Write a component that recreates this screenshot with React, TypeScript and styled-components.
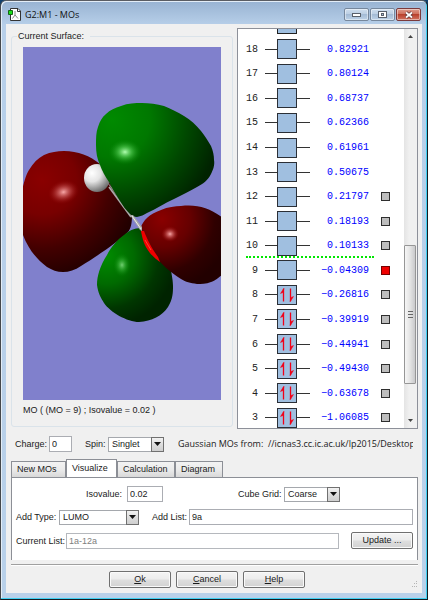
import React, { useState } from "react";
import styled, { createGlobalStyle, css } from "styled-components";

const uiFont = `"Liberation Sans", Arial, sans-serif`;
const titleFont = `"Open Sans", "Noto Sans", sans-serif`;

const GlobalStyle = createGlobalStyle`
  *, *::before, *::after { box-sizing: border-box; }
  body { margin: 0; background: #10406e; }
  body, button, input, select { font-family: ${uiFont}; font-size: 9px; line-height: 12px; color: #1a1a1a; }
`;

const Window = styled.main`
  display: flex;
  flex-direction: column;
  min-height: 100vh;
  padding: 0 5px 6px;
  border: 1px solid #161c22;
  border-left-color: #45484c;
  border-top-color: #5a5d63;
  border-radius: 6px 6px 0 0;
  background: linear-gradient(#98b3d2 0, #b7cfe9 24px, #b9d1ea);
  box-shadow: inset -1px -1px 0 #3fd0f2, inset 1px 1px 0 #e3edf7;
`;

const TitleBar = styled.header`
  display: flex;
  align-items: center;
  gap: 4px;
  height: 23px;
  padding: 4px 1px 0 2px;
`;

const Title = styled.h1`
  flex: 1;
  margin: 0;
  font: 400 9px/14px ${titleFont};
  color: #111;
`;

const WindowButtons = styled.div`
  display: flex;
  gap: 1px;
`;

const WindowButton = styled.button<{ $danger?: boolean }>`
  display: flex;
  align-items: center;
  justify-content: center;
  width: 25px;
  height: 13px;
  padding: 0;
  border: 1px solid ${(p) => (p.$danger ? "#7b3a3c" : "#76879c")};
  border-radius: 2px;
  background: ${(p) =>
    p.$danger
      ? "linear-gradient(#dd9a8c 0, #d0705d 45%, #b9412d 50%, #d27360)"
      : "linear-gradient(#cfdeee 0, #bccfe4 45%, #a4bbd5 50%, #bdd2e8)"};
  box-shadow: inset 0 0 0 1px rgba(255, 255, 255, 0.45);
`;

const Client = styled.div`
  display: flex;
  flex: 1;
  flex-direction: column;
  padding: 4px 4px 5px 5px;
  background: #f0f0f0;
`;

const Workspace = styled.section`
  display: grid;
  flex: 1;
  grid-template-columns: minmax(0, 1fr) 181px;
  gap: 4px;
`;

const Surface = styled.fieldset`
  display: flex;
  flex-direction: column;
  min-width: 0;
  margin: 2px 0 2px;
  padding: 5px 11px 10px 11px;
  border: 1px solid #dae3ea;
  border-radius: 3px;
`;

const Legend = styled.legend`
  margin-left: -6px;
  padding: 0 6px 0 1px;
`;

const Viewport = styled.div`
  display: flex;
  flex: 1;
  min-height: 120px;
  contain: size;
  background: #8080cc;
  svg { flex: 1; min-width: 0; }
`;

const Caption = styled.p`
  margin: 4px 0 0;
`;

const OrbitalPane = styled.div`
  display: flex;
  min-width: 0;
  overflow: hidden;
  border: 1px solid #8d9099;
  background: #fff;
`;

const Orbitals = styled.ul`
  display: flex;
  flex: 1;
  flex-direction: column;
  margin: 0 0 -2px;
  padding: 0;
  list-style: none;
`;

const Orbital = styled.li<{ $divider?: boolean }>`
  display: grid;
  flex: 1;
  grid-template-columns: 20px 52px 59px 22px;
  align-items: center;
  position: relative;
  font: 10px/13px "Liberation Mono", monospace;
  color: #222;
  ${(p) =>
    p.$divider &&
    css`
      &::before {
        content: "";
        position: absolute;
        top: -2px;
        left: 8px;
        width: 128px;
        border-top: 2px dotted #00e600;
      }
    `}
`;

const PeekRow = styled.li`
  height: 8px;
  padding-left: 39px;
`;

const PeekBox = styled.div`
  width: 20px;
  height: 5px;
  border: 1px solid #222;
  border-top: 0;
  background: #9fbfe0;
`;

const Index = styled.span`
  text-align: right;
`;

const Level = styled.span`
  display: flex;
  align-items: center;
  margin-left: 7px;
  width: 45px;
  &::before { content: ""; width: 12px; height: 1px; background: #333; }
  &::after { content: ""; width: 13px; height: 1px; background: #333; }
`;

const Box = styled.span`
  width: 20px;
  height: 20px;
  border: 1px solid #2b2f36;
  background: #a0bfe0;
  svg { display: block; }
`;

const Energy = styled.span`
  text-align: right;
  color: #0000ff;
`;

const Pick = styled.input`
  appearance: none;
  width: 9px;
  height: 9px;
  margin: 0 0 0 12px;
  border: 1px solid #2e2e2e;
  background: #bdbdbd;
  &:checked { background: #f00000; border-color: #700; }
`;

const Scroll = styled.div`
  display: flex;
  flex-direction: column;
  width: 13px;
  background: linear-gradient(90deg, #e4e4e4, #f0f0f0 40%);
`;

const ScrollArrow = styled.button`
  display: flex;
  align-items: center;
  justify-content: center;
  height: 15px;
  padding: 0;
  border: 0;
  background: transparent;
`;

const ScrollGap = styled.div<{ $grow: number }>`
  flex: ${(p) => p.$grow};
`;

const Thumb = styled.div`
  display: flex;
  flex: 138;
  align-items: center;
  justify-content: center;
  margin-right: 1px;
  border: 1px solid #969696;
  border-radius: 1px;
  background: linear-gradient(90deg, #f6f6f6, #e4e4e4 50%, #c9c9cb);
`;

const Grip = styled.span`
  width: 5px;
  height: 7px;
  background: repeating-linear-gradient(#666 0 1px, transparent 1px 3px);
`;

const Settings = styled.div`
  display: flex;
  align-items: center;
  margin-top: 7px;
  padding: 0 5px 0 4px;
`;

const Label = styled.label<{ $width: number; $right?: boolean }>`
  flex: none;
  width: ${(p) => p.$width}px;
  padding-right: ${(p) => (p.$right ? 5 : 0)}px;
  text-align: ${(p) => (p.$right ? "right" : "left")};
  white-space: nowrap;
`;

const TextBox = styled.input<{ $width?: number }>`
  flex: ${(p) => (p.$width ? "none" : "1")};
  width: ${(p) => (p.$width ? `${p.$width}px` : "auto")};
  min-width: 0;
  height: 16px;
  padding: 0 2px;
  border: 1px solid #abadb3;
  border-radius: 0;
  background: #fff;
  &:disabled { color: #808080; border-color: #b5b8bd; }
`;

const SelectWrap = styled.span<{ $width: number }>`
  position: relative;
  flex: none;
  width: ${(p) => p.$width}px;
  height: 15px;
`;

const Select = styled.select`
  display: block;
  appearance: none;
  width: 100%;
  height: 100%;
  padding: 0 14px 1px 3px;
  border: 1px solid #a5a8ad;
  border-radius: 0;
  background: #fff;
`;

const DropMark = styled.span`
  position: absolute;
  top: 0;
  right: 0;
  bottom: 0;
  display: flex;
  align-items: center;
  justify-content: center;
  width: 13px;
  border: 1px solid #707070;
  background: linear-gradient(#f2f2f2, #dddddd 50%, #cfcfcf);
  pointer-events: none;
`;

const Source = styled.p`
  flex: 1;
  min-width: 0;
  margin: 0 0 0 14px;
  overflow: hidden;
  font: 9px/14px ${titleFont};
  white-space: pre;
`;

const Tabs = styled.div`
  display: flex;
  align-items: flex-end;
  margin: 7px 0 -1px;
  height: 19px;
`;

const Tab = styled.button<{ $active: boolean; $width: number }>`
  flex: none;
  width: ${(p) => p.$width}px;
  height: ${(p) => (p.$active ? 19 : 17)}px;
  padding: 0 0 1px 5px;
  border: 1px solid #8c8f96;
  border-bottom-color: ${(p) => (p.$active ? "#fff" : "#8c8f96")};
  background: ${(p) => (p.$active ? "#fff" : "linear-gradient(#f3f3f3, #ebebeb 50%, #d8d8d8)")};
  text-align: left;
  white-space: nowrap;
`;

const Panel = styled.section`
  display: flex;
  flex-direction: column;
  gap: 7px;
  padding: 8px 4px 11px;
  border: 1px solid #8c8f96;
  border-bottom: 0;
  background: #fff;
`;

const FormRow = styled.div`
  display: flex;
  align-items: center;
`;

const Spacer = styled.span<{ $width?: number }>`
  flex: ${(p) => (p.$width ? "none" : "1")};
  width: ${(p) => p.$width ?? 0}px;
`;

const PushButton = styled.button`
  flex: none;
  width: 62px;
  height: 17px;
  padding: 0 0 1px;
  border: 1px solid #707070;
  border-radius: 2px;
  background: linear-gradient(#f4f4f4, #ececec 48%, #dedede 52%, #d2d2d2);
  box-shadow: inset 0 0 0 1px #fafafa;
`;

const Footer = styled.footer`
  display: flex;
  align-items: center;
  margin-top: 4px;
  padding-top: 6px;
  border-top: 1px solid #a0a0a0;
  box-shadow: inset 0 1px 0 #fff;
`;

const FooterButtons = styled.div`
  display: flex;
  flex: 1;
  justify-content: center;
  gap: 5px;
  padding-right: 8px;
`;

const GripMark = styled.svg`
  align-self: flex-end;
`;

type Row = { n: number; e: string; pick?: boolean };

const rows: Row[] = [
  { n: 18, e: "0.82921" },
  { n: 17, e: "0.80124" },
  { n: 16, e: "0.68737" },
  { n: 15, e: "0.62366" },
  { n: 14, e: "0.61961" },
  { n: 13, e: "0.50675" },
  { n: 12, e: "0.21797", pick: true },
  { n: 11, e: "0.18193", pick: true },
  { n: 10, e: "0.10133", pick: true },
  { n: 9, e: "−0.04309", pick: true },
  { n: 8, e: "−0.26816", pick: true },
  { n: 7, e: "−0.39919", pick: true },
  { n: 6, e: "−0.44941", pick: true },
  { n: 5, e: "−0.49430", pick: true },
  { n: 4, e: "−0.63678", pick: true },
  { n: 3, e: "−1.06085", pick: true },
];

const tabs = [
  { name: "New MOs", width: 55 },
  { name: "Visualize", width: 51 },
  { name: "Calculation", width: 58 },
  { name: "Diagram", width: 48 },
];

function Electrons() {
  return (
    <svg width="18" height="18" viewBox="0 0 18 18" aria-hidden="true">
      <path d="M5.500 3V15.500" stroke="#f00018" strokeWidth="1.300" />
      <path d="M6 2L2.500 7.500L5 6.500Z" fill="#f00018" stroke="#f00018" strokeWidth=".5" />
      <path d="M12.500 2.500V15" stroke="#f00018" strokeWidth="1.300" />
      <path d="M12 16L15.500 10.500L13 11.500Z" fill="#f00018" stroke="#f00018" strokeWidth=".5" />
    </svg>
  );
}

function Molecule() {
  return (
    <svg viewBox="23 47 198 353" preserveAspectRatio="xMidYMid slice" role="img" aria-label="Molecular orbital surface">
      <defs>
        <radialGradient id="redLeft" gradientUnits="userSpaceOnUse" cx="42" cy="180" r="98">
          <stop offset="0" stopColor="#8a0000" />
          <stop offset=".35" stopColor="#780000" />
          <stop offset=".7" stopColor="#430000" />
          <stop offset="1" stopColor="#220000" />
        </radialGradient>
        <radialGradient id="redRight" gradientUnits="userSpaceOnUse" cx="162" cy="219" r="70">
          <stop offset="0" stopColor="#8a0000" />
          <stop offset=".4" stopColor="#660000" />
          <stop offset=".75" stopColor="#300000" />
          <stop offset="1" stopColor="#220000" />
        </radialGradient>
        <radialGradient id="greenTop" gradientUnits="userSpaceOnUse" cx="112" cy="120" r="108">
          <stop offset="0" stopColor="#008a00" />
          <stop offset=".35" stopColor="#007800" />
          <stop offset=".7" stopColor="#004800" />
          <stop offset="1" stopColor="#002300" />
        </radialGradient>
        <radialGradient id="greenLow" gradientUnits="userSpaceOnUse" cx="106" cy="256" r="70">
          <stop offset="0" stopColor="#008c00" />
          <stop offset=".4" stopColor="#006a00" />
          <stop offset=".75" stopColor="#003600" />
          <stop offset="1" stopColor="#002300" />
        </radialGradient>
        <radialGradient id="atom" gradientUnits="userSpaceOnUse" cx="92" cy="173" r="22">
          <stop offset="0" stopColor="#fff" />
          <stop offset=".4" stopColor="#e4e4e4" />
          <stop offset="1" stopColor="#555" />
        </radialGradient>
        <radialGradient id="shineRed">
          <stop offset="0" stopColor="#f8a8a8" />
          <stop offset=".4" stopColor="#d06060" stopOpacity=".65" />
          <stop offset="1" stopColor="#900000" stopOpacity="0" />
        </radialGradient>
        <radialGradient id="shineGreen">
          <stop offset="0" stopColor="#b0ffb0" />
          <stop offset=".4" stopColor="#50c850" stopOpacity=".7" />
          <stop offset="1" stopColor="#008000" stopOpacity="0" />
        </radialGradient>
      </defs>
      <path fill="url(#redLeft)" d="M21 194C25 178 27 173 29 170C33 163 38 158 44 155C51 152 57 151 64 151C78 151 90 156 100 164L109 182L132 216C132 222 131 229 128 232C119 241 96 257 81 266C75 270 69 272 63 272C57 272 52 270 47 267C35 258 26 246 21 229Z" />
      <path fill="url(#greenLow)" d="M142 228C133 228 129 231 124 235C117 240 111 247 107 255C100 266 97 276 97 285C98 293 101 298 104 303C110 312 127 322 139 322C152 321 162 316 168 307C173 299 173 292 173 286C173 281 172 277 171 270L154 250Z" />
      <path fill="url(#redRight)" d="M141 227C143 221 149 214 161 210C168 207 175 206 181 206C197 204 210 208 223 218V274C217 279 214 281 211 282C206 284 201 284 197 284C190 283 186 282 181 279C171 273 160 263 153 254C147 246 142 239 141 230Z" />
      <ellipse cx="97" cy="178" rx="13" ry="14" fill="url(#atom)" />
      <path d="M106 181L113 188L133 217L129 214Z" fill="#8c8c8c" />
      <path d="M109 187L131 217" stroke="#aaa" strokeWidth="1.600" />
      <path fill="url(#greenTop)" d="M96 145C96 138 96 132 98 127C100 121 102 117 106 114C110 110 115 108 121 106C128 103 135 103 142 103C149 103 157 104 164 106C171 109 178 112 184 116C191 120 196 125 201 131C205 136 208 141 211 146C213 151 214 155 214 160C215 165 213 170 211 174C208 180 203 184 197 187C190 191 182 195 174 199C165 203 156 209 147 213C144 215 141 216 137 217C134 217 132 216 130 214C126 210 123 206 120 201C116 195 112 188 109 182C105 176 102 171 100 165C97 159 96 152 96 145Z" />
      <path d="M130 215L133 215L142 227V231L140 230Z" fill="#a9a9a9" />
      <path d="M132 216L141 229" stroke="#ececec" strokeWidth="1" />
      <path d="M141 231L144 231C147 239 151 247 158 257L160 262C153 257 145 250 142 236Z" fill="#f00000" />
      <path d="M145 240L151 250" stroke="#ff5040" strokeWidth=".8" />
      <g>
        <ellipse cx="64" cy="192" rx="16" ry="12" fill="url(#shineRed)" transform="rotate(-15 64 194)" />
        <ellipse cx="170" cy="234" rx="9" ry="8" fill="url(#shineRed)" />
        <ellipse cx="125" cy="152" rx="17" ry="13" fill="url(#shineGreen)" />
        <ellipse cx="122" cy="265" rx="9" ry="12" fill="url(#shineGreen)" opacity=".65" />
      </g>
    </svg>
  );
}

function DropDown({ id, width, options }: { id: string; width: number; options: string[] }) {
  return (
    <SelectWrap $width={width}>
      <Select id={id}>
        {options.map((o) => (
          <option key={o}>{o}</option>
        ))}
      </Select>
      <DropMark>
        <svg width="7" height="4" aria-hidden="true">
          <path d="M0 0H7L3.500 4Z" fill="#111" />
        </svg>
      </DropMark>
    </SelectWrap>
  );
}

export default function App() {
  const [tab, setTab] = useState("Visualize");
  const [picked, setPicked] = useState<number[]>([9]);
  const toggle = (n: number) =>
    setPicked((p) => (p.includes(n) ? p.filter((x) => x !== n) : [...p, n]));

  return (
    <>
      <GlobalStyle />
      <Window>
        <TitleBar>
          <svg width="13" height="13" viewBox="0 0 13 13" aria-hidden="true">
            <path d="M2.500 .5H10L12.500 3V12.500H2.500Z" fill="#fff" stroke="#333" />
            <path d="M9.500 .5V3.500H12.500" fill="none" stroke="#333" />
            <path d="M7 3V7L4.500 10.500M7 7L10 10.500" fill="none" stroke="#888" />
            <path d="M.5 2.500H4.500V6.500H.5Z" fill="#19e019" stroke="#146414" />
          </svg>
          <Title>G2:M1 - MOs</Title>
          <WindowButtons>
            <WindowButton aria-label="Minimize">
              <svg width="9" height="5"><rect x=".5" y="1.500" width="8" height="3" fill="#fff" stroke="#59606b" /></svg>
            </WindowButton>
            <WindowButton aria-label="Maximize">
              <svg width="9" height="7">
                <rect x=".5" y=".5" width="8" height="6" fill="#fff" stroke="#59606b" />
                <rect x="3.500" y="2.500" width="2" height="2" fill="#a9bdd5" stroke="#59606b" />
              </svg>
            </WindowButton>
            <WindowButton $danger aria-label="Close">
              <svg width="10" height="8">
                <path d="M2 1.500L8 6.500M8 1.500L2 6.500" stroke="#5d3537" strokeWidth="3.400" />
                <path d="M2 1.500L8 6.500M8 1.500L2 6.500" stroke="#fff" strokeWidth="1.800" />
              </svg>
            </WindowButton>
          </WindowButtons>
        </TitleBar>

        <Client>
          <Workspace>
            <Surface>
              <Legend>Current Surface:</Legend>
              <Viewport>
                <Molecule />
              </Viewport>
              <Caption>MO ( (MO = 9) ; Isovalue = 0.02 )</Caption>
            </Surface>

            <OrbitalPane>
              <Orbitals>
                <PeekRow>
                  <PeekBox />
                </PeekRow>
                {rows.map((r) => (
                  <Orbital key={r.n} $divider={r.n === 9}>
                    <Index>{r.n}</Index>
                    <Level>
                      <Box>{r.n < 9 && <Electrons />}</Box>
                    </Level>
                    <Energy>{r.e}</Energy>
                    {r.pick && (
                      <Pick
                        type="checkbox"
                        aria-label={`Orbital ${r.n}`}
                        checked={picked.includes(r.n)}
                        onChange={() => toggle(r.n)}
                      />
                    )}
                  </Orbital>
                ))}
              </Orbitals>
              <Scroll>
                <ScrollArrow aria-label="Scroll up">
                  <svg width="5" height="3"><path d="M0 3H5L2.500 0Z" fill="#444" /></svg>
                </ScrollArrow>
                <ScrollGap $grow={202} />
                <Thumb>
                  <Grip />
                </Thumb>
                <ScrollGap $grow={29} />
                <ScrollArrow aria-label="Scroll down">
                  <svg width="5" height="3"><path d="M0 0H5L2.500 3Z" fill="#444" /></svg>
                </ScrollArrow>
              </Scroll>
            </OrbitalPane>
          </Workspace>

          <Settings>
            <Label htmlFor="charge" $width={34}>Charge:</Label>
            <TextBox id="charge" $width={23} defaultValue="0" />
            <Spacer $width={13} />
            <Label htmlFor="spin" $width={23}>Spin:</Label>
            <DropDown id="spin" width={56} options={["Singlet"]} />
            <Source>{"Gaussian MOs from:  //icnas3.cc.ic.ac.uk/lp2015/Desktop"}</Source>
          </Settings>

          <Tabs role="tablist">
            {tabs.map((t) => (
              <Tab
                key={t.name}
                role="tab"
                aria-selected={tab === t.name}
                $active={tab === t.name}
                $width={t.width}
                onClick={() => setTab(t.name)}
              >
                {t.name}
              </Tab>
            ))}
          </Tabs>
          <Panel role="tabpanel">
            <FormRow>
              <Label htmlFor="iso" $width={111} $right>Isovalue:</Label>
              <TextBox id="iso" $width={36} defaultValue="0.02" />
              <Spacer />
              <Label htmlFor="grid" $width={46}>Cube Grid:</Label>
              <DropDown id="grid" width={56} options={["Coarse"]} />
              <Spacer $width={73} />
            </FormRow>
            <FormRow>
              <Label htmlFor="type" $width={43}>Add Type:</Label>
              <DropDown id="type" width={80} options={["LUMO"]} />
              <Spacer $width={13} />
              <Label htmlFor="list" $width={37}>Add List:</Label>
              <TextBox id="list" defaultValue="9a" />
            </FormRow>
            <FormRow>
              <Label htmlFor="current" $width={50}>Current List:</Label>
              <TextBox id="current" defaultValue="1a-12a" disabled />
              <Spacer $width={12} />
              <PushButton>Update ...</PushButton>
            </FormRow>
          </Panel>

          <Footer>
            <FooterButtons>
              <PushButton><u>O</u>k</PushButton>
              <PushButton><u>C</u>ancel</PushButton>
              <PushButton><u>H</u>elp</PushButton>
            </FooterButtons>
            <GripMark width="7" height="7" fill="#b5b5b5" aria-hidden="true">
              <path d="M5 0h1v1h-1zM3 2h1v1h-1zM5 2h1v1h-1zM1 5h1v1h-1zM3 5h1v1h-1zM5 5h1v1h-1z" />
            </GripMark>
          </Footer>
        </Client>
      </Window>
    </>
  );
}
